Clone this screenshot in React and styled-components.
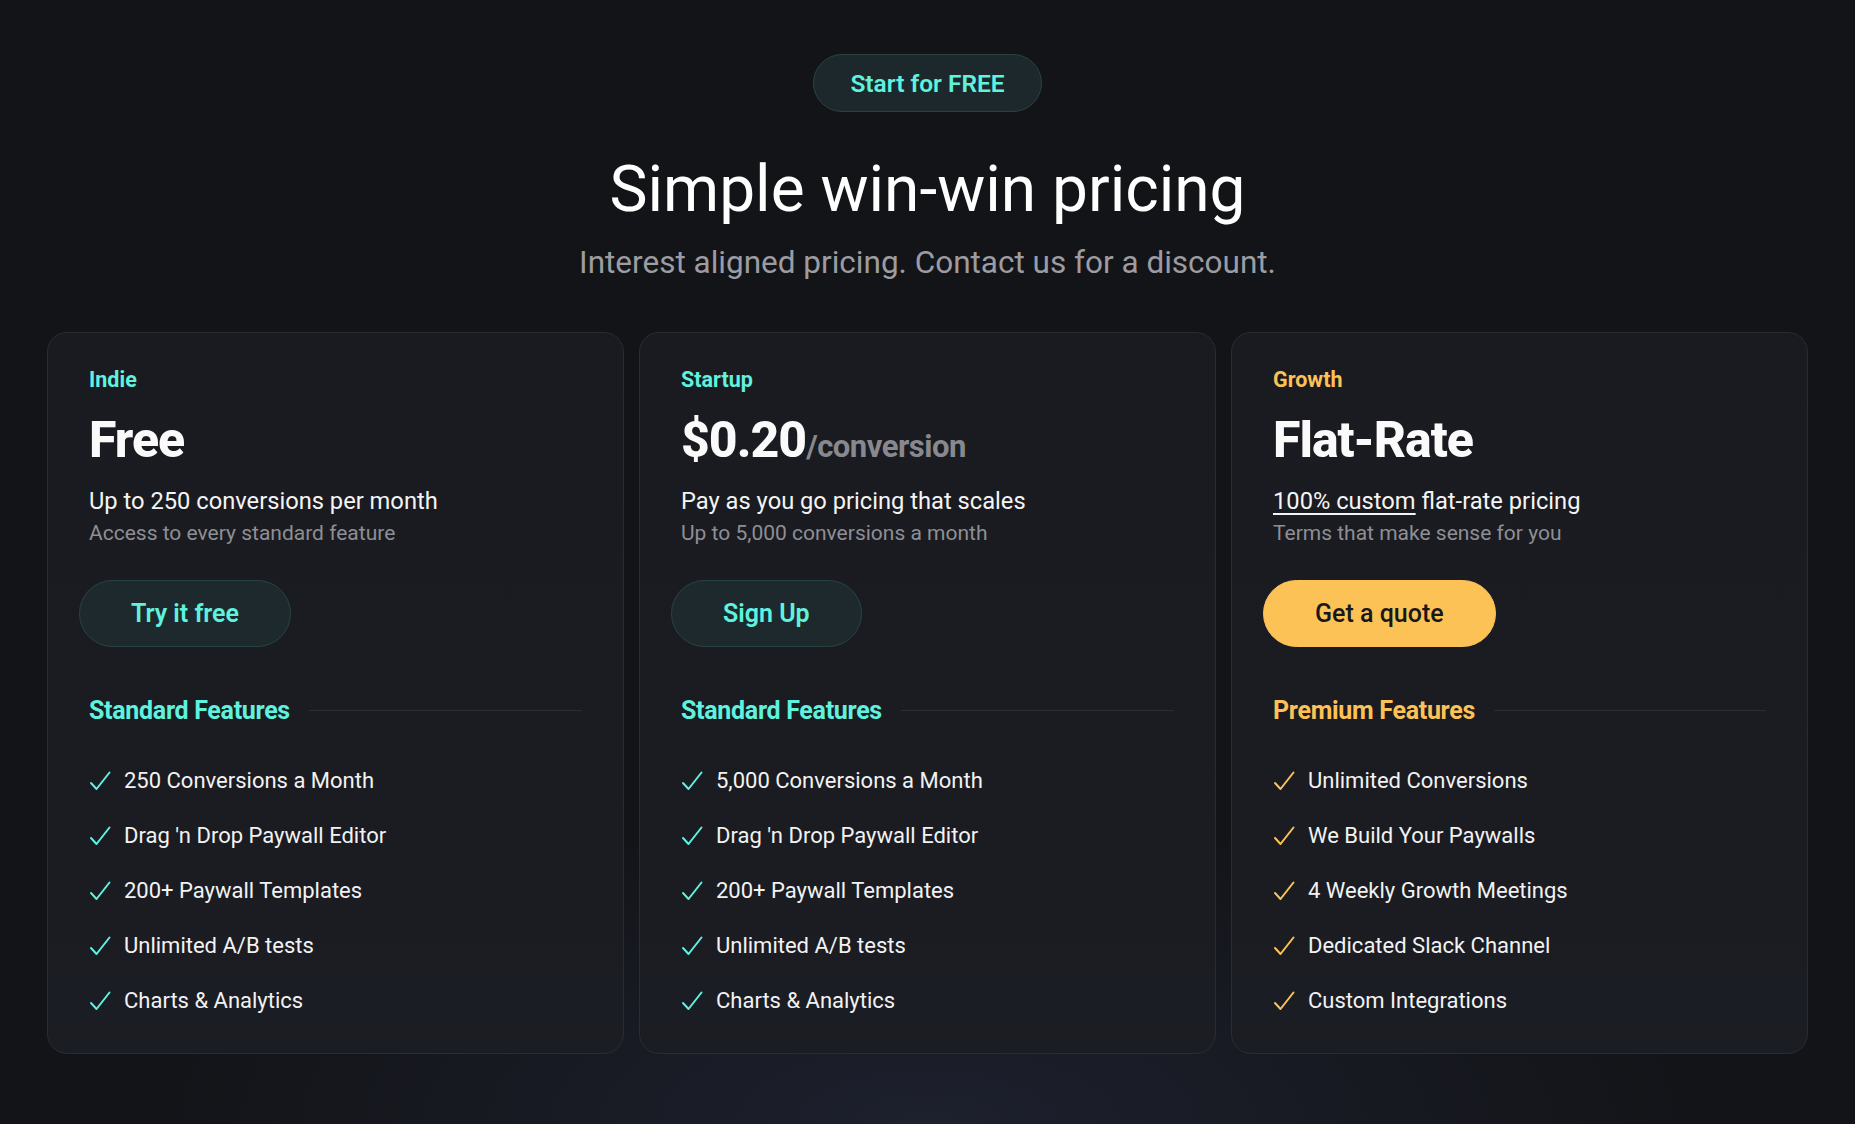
import { createGlobalStyle, styled } from "styled-components";

const GlobalStyle = createGlobalStyle`
  * { box-sizing: border-box; }
  html, body { margin: 0; padding: 0; }
  body {
    background: #131418;
    font-family: Roboto, "Noto Sans", Arial, sans-serif;
    color: #f2f2f3;
  }
`;

const CYAN = "#5ef2df";
const GOLD = "#fdc256";

const plans = [
  {
    tier: "Indie",
    accent: CYAN,
    price: "Free",
    lead: "Up to 250 conversions per month",
    note: "Access to every standard feature",
    cta: "Try it free",
    solid: false,
    heading: "Standard Features",
    features: [
      "250 Conversions a Month",
      "Drag 'n Drop Paywall Editor",
      "200+ Paywall Templates",
      "Unlimited A/B tests",
      "Charts & Analytics",
    ],
  },
  {
    tier: "Startup",
    accent: CYAN,
    price: "$0.20",
    unit: "/conversion",
    lead: "Pay as you go pricing that scales",
    note: "Up to 5,000 conversions a month",
    cta: "Sign Up",
    solid: false,
    heading: "Standard Features",
    features: [
      "5,000 Conversions a Month",
      "Drag 'n Drop Paywall Editor",
      "200+ Paywall Templates",
      "Unlimited A/B tests",
      "Charts & Analytics",
    ],
  },
  {
    tier: "Growth",
    accent: GOLD,
    price: "Flat-Rate",
    underline: "100% custom",
    lead: " flat-rate pricing",
    note: "Terms that make sense for you",
    cta: "Get a quote",
    solid: true,
    heading: "Premium Features",
    features: [
      "Unlimited Conversions",
      "We Build Your Paywalls",
      "4 Weekly Growth Meetings",
      "Dedicated Slack Channel",
      "Custom Integrations",
    ],
  },
];

const CheckIcon = ({ color }) => (
  <svg width="22" height="20" viewBox="0 0 22 20" fill="none" stroke={color} strokeWidth="2" strokeLinecap="round" strokeLinejoin="round">
    <path d="M2 12 7.5 18 20.5 1.5" />
  </svg>
);

const App = () => {
  return (
    <>
      <GlobalStyle />
      <Page>
        <Hero>
          <Pill>Start for FREE</Pill>
          <Title>Simple win-win pricing</Title>
          <Subtitle>Interest aligned pricing. Contact us for a discount.</Subtitle>
        </Hero>
        <Cards>
          {plans.map((plan) => (
            <Card key={plan.tier}>
              <Tier $color={plan.accent}>{plan.tier}</Tier>
              <Price>
                {plan.price}
                {plan.unit && <Unit>{plan.unit}</Unit>}
              </Price>
              <Lead>
                {plan.underline && <u>{plan.underline}</u>}
                {plan.lead}
              </Lead>
              <Note>{plan.note}</Note>
              <Cta $solid={plan.solid}>{plan.cta}</Cta>
              <SectionHead>
                <SectionTitle $color={plan.accent}>{plan.heading}</SectionTitle>
                <Rule />
              </SectionHead>
              <List>
                {plan.features.map((f) => (
                  <Item key={f}>
                    <CheckIcon color={plan.accent} />
                    <span>{f}</span>
                  </Item>
                ))}
              </List>
            </Card>
          ))}
        </Cards>
      </Page>
    </>
  );
};
export default App;

const Page = styled.div`
  min-height: 1124px;
  padding: 54px 47px 71px;
  background:
    radial-gradient(ellipse 60% 40% at 50% 100%, rgba(30, 34, 48, 0.9), rgba(19, 20, 24, 0) 70%),
    #131418;
`;

const Hero = styled.div`
  display: flex;
  flex-direction: column;
  align-items: center;
`;

const Pill = styled.div`
  height: 58px;
  padding: 0 36px;
  display: flex;
  align-items: center;
  border-radius: 29px;
  background: #1d282c;
  border: 1.5px solid #284442;
  color: ${CYAN};
  font-size: 24.5px;
  font-weight: 600;
`;

const Title = styled.h1`
  margin: 39px 0 0;
  font-size: 64px;
  line-height: 77px;
  font-weight: 400;
  color: #ffffff;
`;

const Subtitle = styled.p`
  margin: 16px 0 0;
  font-size: 31.5px;
  line-height: 37px;
  color: #9c9ca2;
`;

const Cards = styled.div`
  margin-top: 51px;
  display: grid;
  grid-template-columns: repeat(3, 1fr);
  gap: 15px;
`;

const Card = styled.div`
  padding: 35px 41px 25px;
  border-radius: 20px;
  border: 1px solid #2a2c31;
  background: linear-gradient(180deg, #1a1b20 0%, #1a1c21 70%, #1b1d24 100%);
  display: flex;
  flex-direction: column;
  align-items: flex-start;
`;

const Tier = styled.div`
  font-size: 21.5px;
  line-height: 24px;
  font-weight: 700;
  color: ${(p) => p.$color};
`;

const Price = styled.div`
  margin-top: 19px;
  height: 58px;
  display: flex;
  align-items: baseline;
  font-size: 50px;
  line-height: 58px;
  font-weight: 800;
  letter-spacing: -1px;
  color: #fafafa;
`;

const Unit = styled.span`
  font-size: 31px;
  line-height: 31px;
  font-weight: 700;
  letter-spacing: -0.5px;
  color: #88898e;
`;

const Lead = styled.div`
  margin-top: 17px;
  font-size: 23.7px;
  line-height: 31px;
  color: #f4f4f5;
  u {
    text-underline-offset: 4px;
    text-decoration-thickness: 2px;
  }
`;

const Note = styled.div`
  margin-top: 3px;
  font-size: 21px;
  line-height: 27px;
  color: #8e8f95;
`;

const Cta = styled.button`
  margin: 33px 0 0 -10px;
  height: 67px;
  padding: 0 51px;
  border-radius: 34px;
  font-family: inherit;
  font-size: 25px;
  font-weight: ${(p) => (p.$solid ? 500 : 600)};
  cursor: pointer;
  color: ${(p) => (p.$solid ? "#17181b" : CYAN)};
  background: ${(p) => (p.$solid ? GOLD : "#1e292d")};
  border: 1.5px solid ${(p) => (p.$solid ? GOLD : "#284442")};
`;

const SectionHead = styled.div`
  margin-top: 49px;
  width: 100%;
  display: flex;
  align-items: center;
  gap: 19px;
`;

const SectionTitle = styled.div`
  font-size: 25px;
  line-height: 29px;
  font-weight: 700;
  letter-spacing: -0.3px;
  color: ${(p) => p.$color};
  white-space: nowrap;
`;

const Rule = styled.div`
  flex: 1;
  height: 1px;
  background: #2b2d32;
`;

const List = styled.ul`
  margin: 28px 0 0;
  padding: 0;
  list-style: none;
`;

const Item = styled.li`
  height: 55px;
  display: flex;
  align-items: center;
  gap: 13px;
  font-size: 22px;
  color: #f2f2f3;
  svg { flex-shrink: 0; }
`;
